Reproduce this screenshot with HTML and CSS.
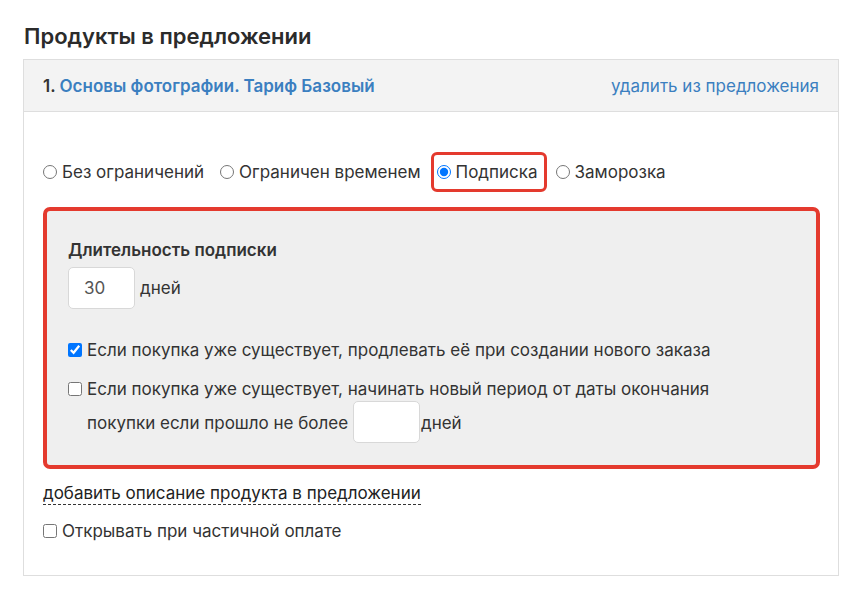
FILE: index.html
```html
<!DOCTYPE html>
<html lang="ru">
<head>
  <meta charset="UTF-8" />
  <meta name="viewport" content="width=device-width, initial-scale=1" />
  <title>Продукты в предложении</title>
  <link rel="stylesheet" href="styles.css">
</head>
<body>
  <h2 class="title">Продукты в предложении</h2>

  <div class="panel">
    <div class="panel-head">
      <div class="product-name">1. <a href="#">Основы фотографии. Тариф Базовый</a></div>
      <a href="#" class="remove-link">удалить из предложения</a>
    </div>

    <div class="panel-body">
      <div class="types">
        <label class="type"><input type="radio" name="type" /> Без ограничений</label>
        <label class="type"><input type="radio" name="type" /> Ограничен временем</label>
        <label class="type type-active"><input type="radio" name="type" checked /> Подписка</label>
        <label class="type"><input type="radio" name="type" /> Заморозка</label>
      </div>

      <!-- Настройки подписки -->
      <div class="sub-box">
        <div class="sub-label">Длительность подписки</div>
        <div class="days-row">
          <input type="text" class="days-input" value="30" />
          <span>дней</span>
        </div>

        <label class="check-row">
          <input type="checkbox" checked />
          <span>Если покупка уже существует, продлевать её при создании нового заказа</span>
        </label>
        <label class="check-row check-row-wrap">
          <input type="checkbox" />
          <span>Если покупка уже существует, начинать новый период от даты окончания<br>
            покупки если прошло не более <input type="text" class="days-input days-inline" />дней</span>
        </label>
      </div>

      <a href="#" class="desc-link">добавить описание продукта в предложении</a>

      <label class="check-row partial">
        <input type="checkbox" />
        <span>Открывать при частичной оплате</span>
      </label>
    </div>
  </div>
</body>
</html>
```

FILE: styles.css
```css
body {
  margin: 0;
  padding: 23px 20px 0 23px;
  font-family: Inter, "Noto Sans", sans-serif;
  font-size: 17px;
  color: #333;
  background-color: #fff;
}

.title {
  margin: 0 0 10px 1px;
  font-size: 22px;
  font-weight: 600;
  color: #2b2b2b;
}

.panel {
  width: 814px;
  border: 1px solid #dedede;
}

.panel-head {
  display: flex;
  justify-content: space-between;
  align-items: center;
  height: 51px;
  padding: 0 19px;
  background-color: #f3f3f3;
  border-bottom: 1px solid #dedede;
}

.product-name {
  font-weight: 600;
}

.product-name a {
  color: #3b7fc0;
  text-decoration: none;
}

.remove-link {
  color: #3b7fc0;
  text-decoration: none;
}

.panel-body {
  padding: 40px 18px 27px 19px;
}

.types {
  display: flex;
  align-items: center;
}

.type {
  display: flex;
  align-items: center;
  gap: 5px;
  height: 34px;
  padding: 0 4px 0 3px;
  margin-right: 3px;
  border: 3px solid transparent;
  border-radius: 6px;
}

.type:first-child {
  padding-left: 0;
  border-left: 0;
}

.type input {
  margin: 0;
  width: 14px;
  height: 14px;
}

.type-active {
  padding-right: 6px;
  border-color: #e43a2e;
}

.sub-box {
  margin-top: 15px;
  padding: 29px 20px 24px 21px;
  background-color: #efefef;
  border: 4px solid #e43a2e;
  border-radius: 7px;
}

.sub-label {
  font-weight: 600;
  margin-bottom: 7px;
}

.days-row {
  display: flex;
  align-items: center;
  gap: 5px;
  margin-bottom: 24px;
}

.days-input {
  width: 67px;
  height: 42px;
  box-sizing: border-box;
  padding: 0 15px;
  border: 1px solid #d8d8d8;
  border-radius: 5px;
  background-color: #fff;
  font-family: inherit;
  font-size: 17px;
  color: #555;
}

.check-row {
  display: flex;
  align-items: flex-start;
  gap: 5px;
  line-height: 34px;
}

.check-row + .check-row {
  margin-top: 5px;
}

.check-row input[type="checkbox"] {
  margin: 10px 0 0 0;
  width: 14px;
  height: 14px;
}

.check-row-wrap span {
  display: block;
}

.days-inline {
  vertical-align: middle;
  margin: -6px 1px -2px 0;
}

.desc-link {
  display: inline-block;
  margin-top: 14px;
  color: #222;
  text-decoration: none;
  border-bottom: 1px dashed #333;
  line-height: 21px;
}

.partial {
  margin-top: 9px;
}

.partial input[type="checkbox"] {
  margin-left: 0;
}
```
